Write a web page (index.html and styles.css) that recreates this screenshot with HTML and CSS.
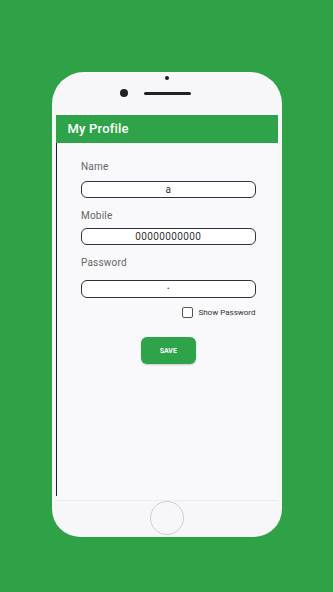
FILE: index.html
```html
<!DOCTYPE html>
<html lang="en">
<head>
  <meta charset="UTF-8">
  <meta name="viewport" content="width=device-width, initial-scale=1.0">
  <title>My Profile</title>
  <link rel="stylesheet" href="styles.css">
</head>
<body>
  <div class="phone">
    <div class="bezel-top">
      <span class="sensor"></span>
      <div class="cam-row">
        <span class="camera"></span>
        <span class="speaker"></span>
      </div>
    </div>

    <div class="screen">
      <header class="appbar">My Profile</header>
      <div class="content">
        <form class="profile-form">
          <label for="name">Name</label>
          <input type="text" id="name" value="a">

          <label for="mobile" class="spaced">Mobile</label>
          <input type="text" id="mobile" value="00000000000" class="tight">

          <label for="password" class="spaced">Password</label>
          <input type="password" id="password" value="a" class="pw">

          <div class="show-row">
            <input type="checkbox" id="showPw">
            <label for="showPw" class="show-label">Show Password</label>
          </div>

          <button type="button" class="save">SAVE</button>
        </form>
      </div>
    </div>

    <div class="bezel-bottom">
      <span class="home"></span>
    </div>
  </div>
</body>
</html>
```

FILE: styles.css
```css
body {
  margin: 0;
  background: #2fa147;
  font-family: Roboto, "DejaVu Sans", sans-serif;
  display: flex;
  flex-direction: column;
  align-items: center;
  height: 592px;
  overflow: hidden;
}
.phone {
  margin-top: 72px;
  width: 230px;
  height: 465px;
  background: #f7f7f9;
  border-radius: 32px 32px 28px 28px;
  display: flex;
  flex-direction: column;
  box-sizing: border-box;
  padding: 0 4px;
}
.bezel-top {
  height: 43px;
  display: flex;
  flex-direction: column;
  align-items: center;
}
.sensor {
  width: 4px;
  height: 4px;
  border-radius: 50%;
  background: #1c1c1c;
  margin-top: 4px;
}
.cam-row {
  display: flex;
  align-items: center;
  margin-top: 9px;
  margin-left: -23px;
}
.camera {
  width: 8px;
  height: 8px;
  border-radius: 50%;
  background: #222;
}
.speaker {
  width: 47px;
  height: 3px;
  border-radius: 2px;
  background: #222;
  margin-left: 16px;
}
.screen {
  height: 385px;
  background: #f9f8fb;
  display: flex;
  flex-direction: column;
  border-bottom: 1px solid #ececf0;
}
.appbar {
  height: 28px;
  background: #2ea349;
  color: #fff;
  font-size: 13px;
  font-weight: 500;
  line-height: 28px;
  padding-left: 12px;
  letter-spacing: 0.2px;
}
.content {
  flex: 1;
  border-left: 1.5px solid #1d1f2a;
  margin-bottom: 4px;
  padding: 18px 22px 0 24.5px;
}
.profile-form {
  display: flex;
  flex-direction: column;
}
.profile-form label {
  font-size: 10px;
  line-height: 12px;
  color: #666;
  letter-spacing: 0.2px;
}
.profile-form label.spaced {
  margin-top: 12px;
}
.profile-form input[type="text"],
.profile-form input[type="password"] {
  margin: 8px 0 0;
  height: 17px;
  box-sizing: border-box;
  border: 1.5px solid #2b3340;
  border-radius: 6px;
  background: #fff;
  text-align: center;
  font-family: Roboto, "DejaVu Sans", sans-serif;
  font-size: 10px;
  color: #333;
  padding: 0;
  outline: none;
}
.profile-form input.tight {
  margin-top: 6px;
  letter-spacing: 0.4px;
}
.profile-form input.pw {
  margin-top: 11px;
  height: 18px;
  font-size: 7px;
}
.show-row {
  display: flex;
  align-items: center;
  justify-content: flex-end;
  margin-top: 9px;
}
.show-row input {
  appearance: none;
  width: 11px;
  height: 11px;
  margin: 0 5px 0 0;
  border: 1.5px solid #555;
  border-radius: 2px;
  background: #fff;
}
.profile-form .show-label {
  font-size: 8px;
  line-height: 10px;
  color: #333;
  letter-spacing: 0;
}
.save {
  align-self: center;
  margin-top: 19px;
  width: 55px;
  height: 27px;
  border: none;
  border-radius: 6px;
  background: #2ea349;
  color: #fff;
  font-family: Roboto, "DejaVu Sans", sans-serif;
  font-size: 7px;
  font-weight: bold;
  box-shadow: 0 1px 2px rgba(0, 0, 0, 0.2);
}
.bezel-bottom {
  flex: 1;
  display: flex;
  align-items: center;
  justify-content: center;
}
.home {
  width: 32px;
  height: 32px;
  border-radius: 50%;
  border: 1.5px solid #cfcfd2;
  margin-top: -2px;
}
```
